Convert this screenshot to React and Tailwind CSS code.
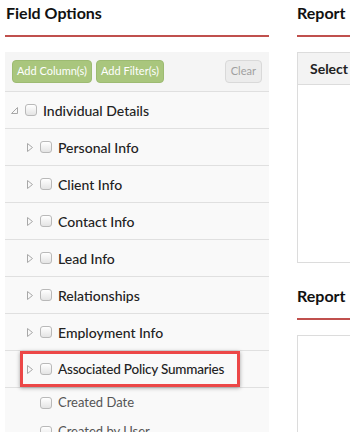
const Tri = ({ open }) =>
  open ? (
    <svg width="7" height="7" viewBox="0 0 7 7" className="shrink-0">
      <path d="M6.5 0.5 L6.5 6.5 L0.5 6.5 Z" fill="none" stroke="#a8a8a8" strokeWidth="1" />
    </svg>
  ) : (
    <svg width="6" height="9" viewBox="0 0 6 9" className="shrink-0">
      <path d="M0.5 0.5 L5.5 4.5 L0.5 8.5 Z" fill="none" stroke="#a8a8a8" strokeWidth="1" />
    </svg>
  );

const Box = () => (
  <span className="w-[12px] h-[12px] shrink-0 rounded-[3px] border border-[#b9b9b9] bg-gradient-to-b from-[#ffffff] to-[#e4e4e4]" />
);

const children = [
  "Personal Info",
  "Client Info",
  "Contact Info",
  "Lead Info",
  "Relationships",
  "Employment Info",
];

export default function App() {
  return (
    <div
      className="w-[350px] h-[432px] overflow-hidden bg-white text-[#222] whitespace-nowrap"
      style={{ fontFamily: "Lato, 'Open Sans', sans-serif" }}
    >
      <div className="flex w-[420px] pl-[5px]">
        {/* left column */}
        <div className="w-[264px] shrink-0">
          <div className="h-[35px] pt-[3px] pl-[1px] text-[16px] leading-[20px] font-bold text-[#111]">Field Options</div>
          <div className="h-[2px] bg-[#c0504d]" />
          <div className="h-[15px]" />
          <div className="bg-[#f9f9f9]">
            <div className="h-[40px] bg-[#f5f5f5] border-b border-[#e0e0e0] flex items-center px-[7px] gap-[4px]">
              <button className="h-[23px] px-[4px] rounded-[4px] bg-[#a9c67d] border border-[#9dbb72] text-white text-[11px]">
                Add Column(s)
              </button>
              <button className="h-[23px] px-[4px] rounded-[4px] bg-[#a9c67d] border border-[#9dbb72] text-white text-[11px]">
                Add Filter(s)
              </button>
              <button className="ml-auto h-[23px] px-[5px] rounded-[4px] bg-[#ececec] border border-[#d9d9d9] text-[#a0a0a0] text-[11px]">
                Clear
              </button>
            </div>
            <div className="h-[37px] border-b border-[#e0e0e0] flex items-center pl-[6px] text-[14px]">
              <Tri open />
              <span className="w-[7px]" />
              <Box />
              <span className="w-[6px]" />
              <span className="font-medium">Individual Details</span>
            </div>
            {children.map((c) => (
              <div key={c} className="h-[37px] border-b border-[#e0e0e0] flex items-center pl-[22px] text-[14px]">
                <Tri />
                <span className="w-[7px]" />
                <Box />
                <span className="w-[6px]" />
                <span className="font-medium">{c}</span>
              </div>
            ))}
            <div className="h-[37px] border-b border-[#e0e0e0] flex items-center pl-[15px]">
              <div className="h-[36px] w-[220px] border-[3px] border-[#ec4747] shadow-[0_1px_4px_rgba(0,0,0,0.35)] flex items-center pl-[4px] text-[13.5px] tracking-[-0.2px]">
                <Tri />
                <span className="w-[7px]" />
                <Box />
                <span className="w-[6px]" />
                <span className="font-medium">Associated Policy Summaries</span>
              </div>
            </div>
            {["Created Date", "Created by User"].map((c) => (
              <div key={c} className="h-[29px] flex items-center pl-[35px] text-[13px] text-[#555]">
                <Box />
                <span className="w-[6px]" />
                <span>{c}</span>
              </div>
            ))}
          </div>
        </div>
        {/* right column */}
        <div className="ml-[28px] w-[200px] shrink-0">
          <div className="h-[35px] pt-[3px] text-[16px] leading-[20px] font-bold text-[#111]">Report</div>
          <div className="h-[2px] bg-[#c0504d]" />
          <div className="h-[15px]" />
          <div className="h-[211px] border border-[#dcdcdc]">
            <div className="h-[32px] bg-[#f3f3f3] border-b border-[#dcdcdc] flex items-center px-[12px] text-[14px] font-bold">
              Select&nbsp;<span className="text-[#e8a33c]">report</span>
            </div>
          </div>
          <div className="h-[55px] flex items-end pb-[12px] text-[16px] leading-[20px] font-bold text-[#111]">Report</div>
          <div className="h-[2px] bg-[#c0504d]" />
          <div className="h-[15px]" />
          <div className="h-[120px] border border-[#dcdcdc]" />
        </div>
      </div>
    </div>
  );
}
